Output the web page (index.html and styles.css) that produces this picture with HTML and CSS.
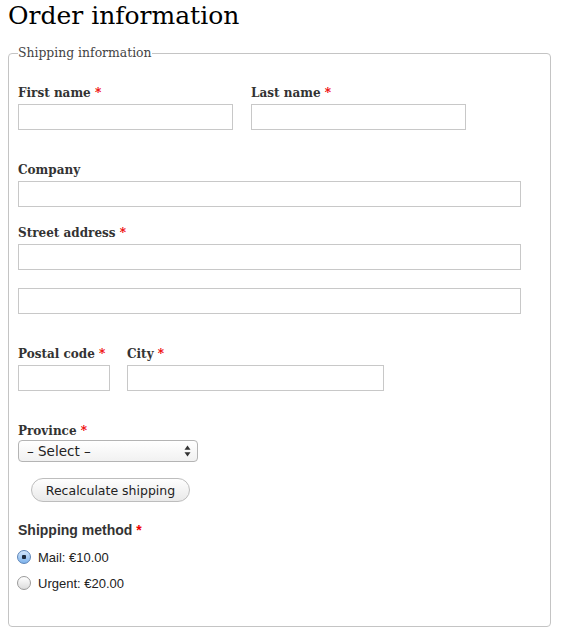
FILE: index.html
```html
<!DOCTYPE html>
<html lang="en">
<head>
<meta charset="utf-8">
<title>Order information</title>
<link rel="stylesheet" href="styles.css">
</head>
<body>
<h1 class="page-title">Order information</h1>
<form class="order-form">
  <fieldset class="shipping">
    <legend class="shipping-legend">Shipping information</legend>

    <div class="row row-names">
      <div class="item">
        <label class="label" for="fn">First name <span class="req">*</span></label>
        <input class="text w-name" id="fn" type="text">
      </div>
      <div class="item">
        <label class="label" for="ln">Last name <span class="req">*</span></label>
        <input class="text w-name" id="ln" type="text">
      </div>
    </div>

    <div class="item item-company">
      <label class="label" for="co">Company</label>
      <input class="text w-full" id="co" type="text">
    </div>

    <div class="item item-street">
      <label class="label" for="st">Street address <span class="req">*</span></label>
      <input class="text w-full" id="st" type="text">
    </div>

    <div class="item item-street2">
      <input class="text w-full" type="text" aria-label="Street address line 2">
    </div>

    <div class="row row-city">
      <div class="item">
        <label class="label" for="pc">Postal code <span class="req">*</span></label>
        <input class="text w-postal" id="pc" type="text">
      </div>
      <div class="item">
        <label class="label" for="ci">City <span class="req">*</span></label>
        <input class="text w-city" id="ci" type="text">
      </div>
    </div>

    <div class="item item-province">
      <label class="label" for="pr">Province <span class="req">*</span></label>
      <div class="select-wrap">
        <select class="select" id="pr">
          <option>– Select –</option>
        </select>
        <svg class="select-arrows" width="7" height="12" viewBox="0 0 7 12" aria-hidden="true">
          <path d="M3.5 0.5 L6.5 4.8 L0.5 4.8 Z" fill="#333"/>
          <path d="M3.5 11.5 L6.5 7.2 L0.5 7.2 Z" fill="#333"/>
        </svg>
      </div>
    </div>

    <div class="actions">
      <button class="btn" type="button">Recalculate shipping</button>
    </div>

    <div class="item item-method">
      <div class="label-sans">Shipping method <span class="req">*</span></div>
      <div class="radio-list">
        <label class="radio-row"><input class="radio" type="radio" name="sm" checked><span>Mail: €10.00</span></label>
        <label class="radio-row"><input class="radio" type="radio" name="sm"><span>Urgent: €20.00</span></label>
      </div>
    </div>
  </fieldset>
</form>
</body>
</html>
```

FILE: styles.css
```css
html, body {
  background: #fff;
}
body {
  margin: 0 8px;
  font-family: "DejaVu Serif", "Liberation Serif", serif;
  color: #333;
}
.page-title {
  margin: 0;
  font-size: 25px;
  line-height: 32px;
  font-weight: normal;
  color: #000;
}
.order-form {
  margin: 0;
}
.shipping {
  margin: 13px 2px 0 0;
  padding: 23px 9px 33px 9px;
  border: 1px solid #c4c4c4;
  border-radius: 4px;
  min-width: 0;
}
.shipping-legend {
  padding: 0;
  font-size: 12.4px;
  line-height: 16px;
  color: #444;
}
.row {
  display: flex;
  gap: 18px;
}
.row-city {
  gap: 17px;
  margin-top: 31px;
}
.label {
  display: block;
  font-size: 12px;
  line-height: 16px;
  font-weight: bold;
  color: #333;
  padding-top: 1px;
  margin-bottom: 3px;
}
.req {
  color: #e00;
}
.text {
  display: block;
  box-sizing: border-box;
  height: 26px;
  margin: 0;
  padding: 2px 4px;
  border: 1px solid #c8c8c8;
  border-radius: 0;
  background: #fff;
  font: 13px "Liberation Sans", sans-serif;
}
.w-name { width: 215px; }
.w-full { width: 503px; }
.w-postal { width: 92px; }
.w-city { width: 257px; }

.item-company { margin-top: 31px; }
.item-street { margin-top: 17px; }
.item-street2 { margin-top: 18px; }
.item-province { margin-top: 31px; }
.item-province .label { margin-bottom: 1px; }

.select-wrap {
  position: relative;
  width: 180px;
}
.select {
  display: block;
  appearance: none;
  -webkit-appearance: none;
  box-sizing: border-box;
  width: 180px;
  height: 22px;
  margin: 0;
  padding: 0 0 0 8px;
  border: 1px solid #b4b4b4;
  border-radius: 4px;
  background: linear-gradient(#ffffff, #f1f1f1);
  font: 13.5px "DejaVu Sans", sans-serif;
  color: #222;
}
.select-arrows {
  position: absolute;
  right: 7px;
  top: 5px;
  pointer-events: none;
}
.actions {
  margin-top: 16px;
  padding-left: 13px;
}
.btn {
  display: block;
  box-sizing: border-box;
  width: 159px;
  height: 24px;
  margin: 0;
  padding: 0;
  border: 1px solid #bdbdbd;
  border-radius: 12px;
  background: linear-gradient(#fefefe, #e9e9e9);
  font: 12.5px "DejaVu Sans", sans-serif;
  color: #222;
}
.item-method {
  margin-top: 20px;
  font-family: "Liberation Sans", Arial, sans-serif;
}
.label-sans {
  font-size: 14px;
  line-height: 16px;
  font-weight: bold;
  color: #333;
}
.radio-list {
  margin-top: 9px;
}
.radio-row {
  display: flex;
  align-items: center;
  height: 20px;
  font-size: 13px;
  color: #222;
}
.radio-row + .radio-row {
  margin-top: 6px;
}
.radio {
  appearance: none;
  -webkit-appearance: none;
  box-sizing: border-box;
  width: 14px;
  height: 14px;
  margin: 0 7px 0 -1px;
  border: 1px solid #9a9a9a;
  border-radius: 50%;
  background: linear-gradient(#ffffff, #dcdcdc);
  position: relative;
  flex: none;
}
.radio:checked {
  border-color: #5b84b8;
  background: radial-gradient(circle, #1d2a3c 0 2px, transparent 2.5px), linear-gradient(#d3e6fb, #7eb3ec);
}
```
